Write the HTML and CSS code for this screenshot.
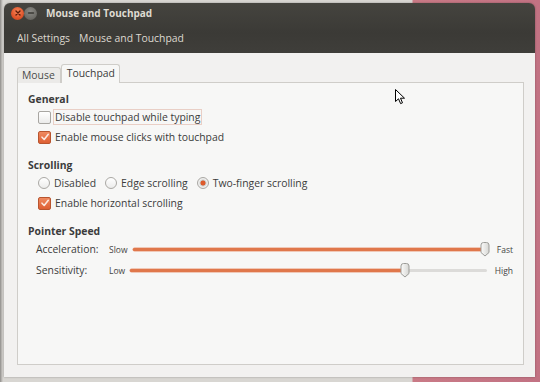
FILE: index.html
```html
<!DOCTYPE html>
<html>
<head>
<meta charset="utf-8">
<link rel="stylesheet" href="styles.css">
</head>
<body>
<div class="window">
  <div class="header">
    <div class="titlebar">
      <span class="wbtn close"><svg width="12" height="12" viewBox="0 0 12 12"><path d="M4 4L8 8M8 4L4 8" stroke="#5a1a08" stroke-width="1.4" stroke-linecap="round"/></svg></span>
      <span class="wbtn min"><svg width="12" height="12" viewBox="0 0 12 12"><path d="M3.5 6H8.5" stroke="#3a3935" stroke-width="1.4" stroke-linecap="round"/></svg></span>
      <span class="title">Mouse and Touchpad</span>
    </div>
    <div class="toolbar">
      <span>All Settings</span>
      <span>Mouse and Touchpad</span>
    </div>
  </div>
  <div class="content">
    <div class="tabs">
      <div class="tab">Mouse</div>
      <div class="tab active">Touchpad</div>
    </div>
    <div class="panel">
      <div class="heading">General</div>
      <div class="row indent">
        <span class="check"></span>
        <span class="label focus">Disable touchpad while typing</span>
      </div>
      <div class="row indent">
        <span class="check on"><svg width="10" height="10" viewBox="0 0 10 10"><path d="M2 5.2L4.2 7.5L8.3 2.3" fill="none" stroke="#fbe9e0" stroke-width="1.6" stroke-linecap="round" stroke-linejoin="round"/></svg></span>
        <span class="label">Enable mouse clicks with touchpad</span>
      </div>

      <div class="heading sec">Scrolling</div>
      <div class="row indent radios">
        <span class="opt"><span class="radio"></span><span class="label">Disabled</span></span>
        <span class="opt"><span class="radio"></span><span class="label">Edge scrolling</span></span>
        <span class="opt"><span class="radio on"></span><span class="label">Two-finger scrolling</span></span>
      </div>
      <div class="row indent">
        <span class="check on"><svg width="10" height="10" viewBox="0 0 10 10"><path d="M2 5.2L4.2 7.5L8.3 2.3" fill="none" stroke="#fbe9e0" stroke-width="1.6" stroke-linecap="round" stroke-linejoin="round"/></svg></span>
        <span class="label">Enable horizontal scrolling</span>
      </div>

      <div class="heading sec">Pointer Speed</div>
      <div class="srow">
        <span class="slabel">Acceleration:</span>
        <span class="mini">Slow</span>
        <span class="track"><span class="fill" style="width:99%"></span><span class="thumb" style="left:99%"><svg width="10" height="15" viewBox="0 0 10 15"><path d="M1 3Q1 0.5 3.5 0.5H6.5Q9 0.5 9 3V10.5L5 14L1 10.5Z" fill="url(#g1)" stroke="#9c9c98" stroke-width="1"/><defs><linearGradient id="g1" x1="0" y1="0" x2="1" y2="0"><stop offset="0" stop-color="#fbfbfa"/><stop offset="1" stop-color="#d6d6d3"/></linearGradient></defs></svg></span></span>
        <span class="mini">Fast</span>
      </div>
      <div class="srow second">
        <span class="slabel">Sensitivity:</span>
        <span class="mini">Low</span>
        <span class="track"><span class="fill" style="width:77%"></span><span class="thumb" style="left:77%"><svg width="10" height="15" viewBox="0 0 10 15"><path d="M1 3Q1 0.5 3.5 0.5H6.5Q9 0.5 9 3V10.5L5 14L1 10.5Z" fill="url(#g2)" stroke="#9c9c98" stroke-width="1"/><defs><linearGradient id="g2" x1="0" y1="0" x2="1" y2="0"><stop offset="0" stop-color="#fbfbfa"/><stop offset="1" stop-color="#d6d6d3"/></linearGradient></defs></svg></span></span>
        <span class="mini">High</span>
      </div>
    </div>
  </div>
</div>
<svg class="cursor" width="11" height="16" viewBox="0 0 11 16"><path d="M0.5 0.5V12.5L3.5 9.8L5.6 14.6L7.5 13.8L5.5 9.2H9.5Z" fill="#fff" stroke="#000" stroke-width="1" stroke-linejoin="round"/></svg>
</body>
</html>
```
FILE: styles.css
```css
html, body {
  margin: 0;
  height: 100%;
}
body {
  width: 540px;
  height: 382px;
  box-sizing: border-box;
  padding: 3px 5px 5px 4px;
  background: linear-gradient(to right, #8d8b88 0, #a9a7a4 1px, #d8d6d2 3px, #d8d6d2 412px, #c97a86 413px, #c27283 100%);
  font-family: "Open Sans", "DejaVu Sans", sans-serif;
  font-size: 10.4px;
  color: #3c3c3c;
  overflow: hidden;
  position: relative;
}
.window {
  height: 100%;
  display: flex;
  flex-direction: column;
  border-radius: 6px 6px 0 0;
  overflow: hidden;
  box-shadow: 0 0 2px rgba(0,0,0,0.35);
}
.header {
  background: linear-gradient(#45443f, #3b3a36 60%, #3f3e3a);
  color: #dfdbd2;
  height: 50px;
  display: flex;
  flex-direction: column;
}
.titlebar {
  height: 20px;
  display: flex;
  align-items: center;
  padding-left: 7px;
}
.wbtn {
  width: 13px;
  height: 13px;
  border-radius: 50%;
  display: flex;
  align-items: center;
  justify-content: center;
}
.wbtn svg { display: block; }
.close {
  background: radial-gradient(circle at 50% 35%, #f7875a, #e0542a 60%, #b9411d);
}
.min {
  background: radial-gradient(circle at 50% 35%, #8b8a85, #6a6964 70%, #585752);
}
.title {
  font-weight: bold;
  margin-left: 9px;
  font-size: 10px;
}
.toolbar {
  flex: 1;
  display: flex;
  align-items: center;
  padding-left: 13px;
  gap: 9px;
  color: #dcd8cf;
}
.content {
  flex: 1;
  background: #f2f1f0;
  padding: 12px 11px 12px 13px;
  display: flex;
  flex-direction: column;
}
.tabs {
  display: flex;
  align-items: flex-end;
  height: 18px;
  position: relative;
  z-index: 1;
  margin-bottom: -1px;
}
.tab {
  height: 15px;
  line-height: 15px;
  padding: 0 5px 0 4px;
  border: 1px solid #cfcdc9;
  border-bottom: none;
  border-radius: 3px 3px 0 0;
  background: #ebeae8;
  color: #4a4a4a;
}
.tab.active {
  height: 18px;
  line-height: 17px;
  padding: 0 4px 0 5px;
  background: #f7f7f6;
  color: #3c3c3c;
}
.panel {
  flex: 1;
  background: #f7f7f6;
  border: 1px solid #cfcdc9;
  padding: 8px 10px 0 10px;
}
.heading {
  font-weight: bold;
  height: 16px;
  line-height: 16px;
}
.heading.sec {
  margin-top: 10px;
}
.row {
  height: 20px;
  display: flex;
  align-items: center;
}
.indent {
  padding-left: 10px;
}
.check {
  width: 11px;
  height: 11px;
  border: 1px solid #a8a6a2;
  border-radius: 2px;
  background: linear-gradient(#ffffff, #ebebea);
  margin-right: 3px;
  display: flex;
  align-items: center;
  justify-content: center;
  flex: none;
}
.check.on {
  border-color: #b8552f;
  background: linear-gradient(#ef8a60, #de5f33);
}
.check svg { display: block; }
.label {
  padding: 0 1px;
}
.focus {
  border: 1px solid #e9cfc6;
  line-height: 14px;
  margin-left: -1px;
}
.radios {
  gap: 8px;
}
.opt {
  display: flex;
  align-items: center;
}
.radio {
  width: 10px;
  height: 10px;
  border: 1px solid #aaa8a4;
  border-radius: 50%;
  background: linear-gradient(#ffffff, #ececeb);
  margin-right: 3px;
  flex: none;
}
.radio.on {
  background: radial-gradient(circle, #dd5a2c 0, #dd5a2c 2.2px, #c9c8c5 2.8px, #efefee 4px);
}
.srow {
  height: 20px;
  display: grid;
  grid-template-columns: 70px auto 1fr auto;
  align-items: center;
  column-gap: 3px;
  padding-left: 8px;
}
.srow.second {
  margin-top: 1px;
}
.mini {
  font-size: 8.5px;
  color: #444;
}
.track {
  position: relative;
  height: 3px;
  background: #dcdbd9;
  border-radius: 2px;
  margin: 0 5px 0 2px;
}
.fill {
  position: absolute;
  left: 0;
  top: 0;
  bottom: 0;
  background: #e0774b;
  border-radius: 2px;
  box-shadow: 0 0 0 0.5px #ea9a78;
}
.thumb {
  position: absolute;
  top: -6px;
  margin-left: -5px;
  width: 10px;
  height: 15px;
}
.thumb svg { display: block; }
.cursor {
  position: absolute;
  left: 395px;
  top: 89px;
}
```
